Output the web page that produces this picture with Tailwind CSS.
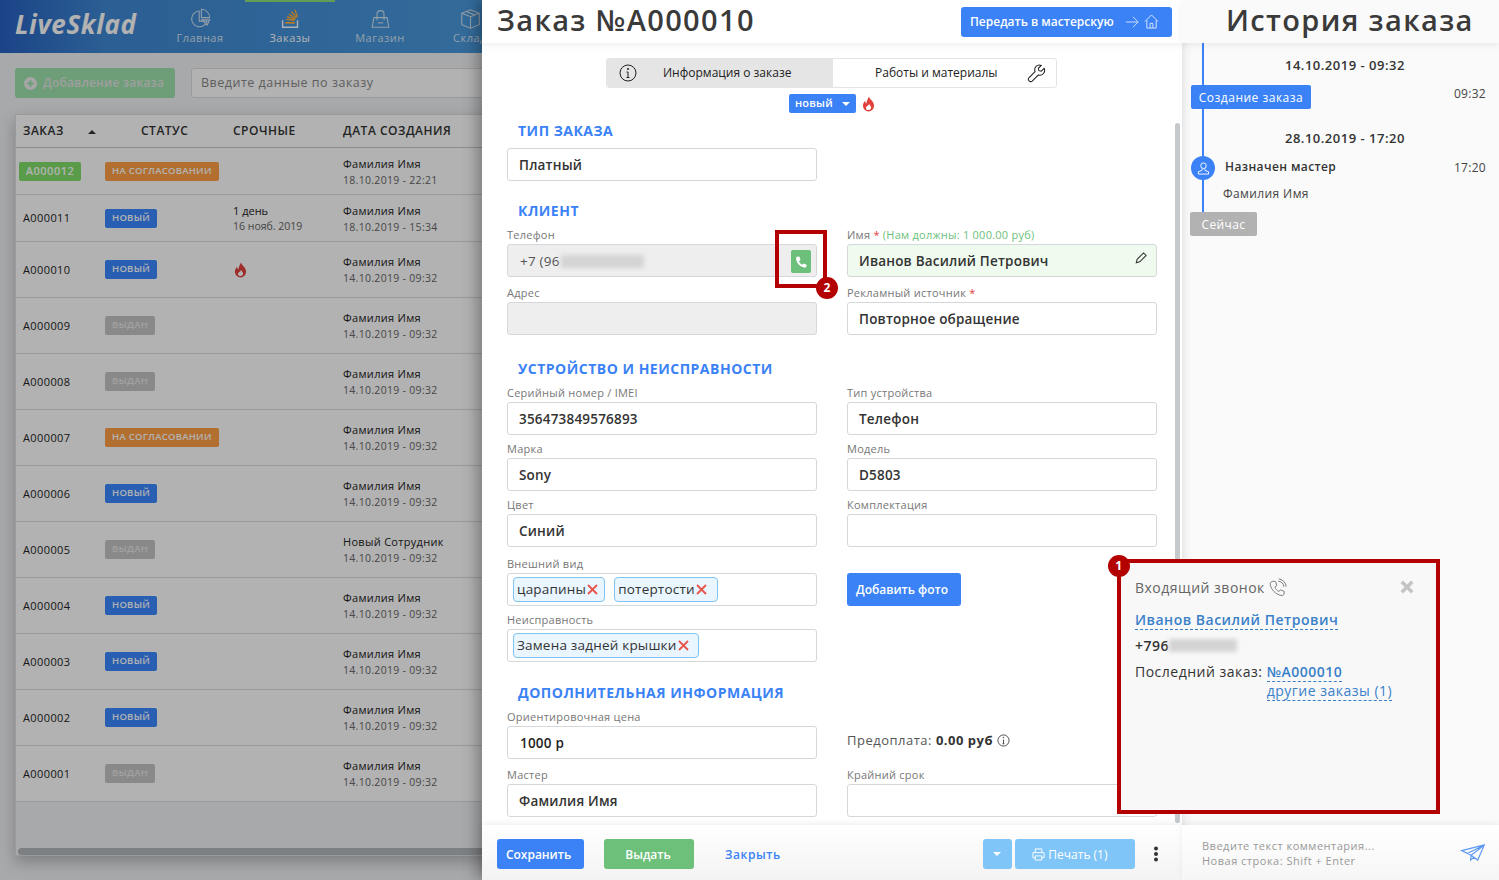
<!DOCTYPE html>
<html lang="ru">
  <head>
    <meta charset="UTF-8" />
    <meta name="viewport" content="width=device-width, initial-scale=1.0" />
    <title>LiveSklad</title>
    <script src="https://cdn.jsdelivr.net/npm/@tailwindcss/browser@4"></script>
  </head>
  <body class="font-['Open_Sans','Noto_Sans',sans-serif] text-[#333]">
    <div class="relative flex h-screen w-full overflow-hidden bg-white">

      <!-- Left: orders list under dim layer -->
      <div class="relative w-[482px] shrink-0 overflow-hidden bg-[#f1f2f5]">
        <header class="flex h-[53px] w-[700px] bg-gradient-to-r from-[#2862c2] via-[#3f88d3] via-[15%] to-[#4fa5e4]">
          <div class="w-[155px] shrink-0 pl-[15px] pt-[7px] text-[26px] leading-[34px] font-bold italic tracking-[0.6px] text-white">LiveSklad</div>
          <a class="flex w-[90px] flex-col items-center pt-[8px] text-[11px] leading-[14px] tracking-[0.5px] text-[#d6e4f2]">
            <svg class="mb-[2px] h-[21px] w-[21px]" viewBox="0 0 24 24" fill="none" stroke="currentColor" stroke-width="1.2"><path d="M10.5 3.5a9 9 0 1 0 9 11.5h-9z"/><path d="M13 1.5a9.5 9.5 0 0 1 9.5 9.5H13z"/><path d="M13.5 13.5h9l-3 6z"/></svg>
            Главная
          </a>
          <a class="relative flex w-[90px] flex-col items-center pt-[8px] text-[11px] leading-[14px] tracking-[0.5px] text-white">
            <span class="absolute top-0 left-0 h-[2px] w-full bg-[#8fe07a]"></span>
            <svg class="mb-[2px] h-[21px] w-[21px]" viewBox="0 0 24 24" fill="none" stroke-width="1.6"><path d="M3 14v8h17v-8" stroke="#fff"/><path d="M6 17h11" stroke="#ffb13b" stroke-width="2"/><path d="M7 13l10 1M8 10l9 3M10 7l8 5M13 4l6 7M17 2l3 8" stroke="#ffb13b"/></svg>
            Заказы
          </a>
          <a class="flex w-[90px] flex-col items-center pt-[8px] text-[11px] leading-[14px] tracking-[0.5px] text-[#d6e4f2]">
            <svg class="mb-[2px] h-[21px] w-[21px]" viewBox="0 0 24 24" fill="none" stroke="currentColor" stroke-width="1.2"><path d="M4.5 11h15l2 11h-19z"/><path d="M8 14V7a4 4 0 0 1 8 0v7"/><path d="M9 17h6"/></svg>
            Магазин
          </a>
          <a class="flex w-[90px] flex-col items-center pt-[8px] text-[11px] leading-[14px] tracking-[0.5px] text-[#d6e4f2]">
            <svg class="mb-[2px] h-[21px] w-[21px]" viewBox="0 0 24 24" fill="none" stroke="currentColor" stroke-width="1.2"><path d="M12 2l10 4v13l-10 4-10-4V6z"/><path d="M2 6l10 4 10-4M12 10v13M7 4l10 4"/></svg>
            Склад
          </a>
        </header>

        <div class="mt-[15px] flex pl-[15px]">
          <button class="flex h-[30px] w-[160px] shrink-0 items-center gap-[6px] rounded-[3px] bg-[#9ce2ab] pl-[9px] text-[12px] font-semibold tracking-[0.2px] whitespace-nowrap text-[#e4e4e4]">
            <svg class="h-[13px] w-[13px] shrink-0" viewBox="0 0 14 14"><circle cx="7" cy="7" r="7" fill="#eee"/><path d="M7 3.5v7M3.5 7h7" stroke="#9ce2ab" stroke-width="2"/></svg>
            Добавление заказа
          </button>
          <div class="ml-[16px] flex h-[30px] w-[400px] shrink-0 items-center rounded-[3px] border border-[#ddd] bg-white pl-[9px] text-[12.5px] tracking-[0.5px] text-[#888]">Введите данные по заказу</div>
        </div>

        <div class="mt-[16px] ml-[15px] flex h-[742px] w-[600px] flex-col border border-[#ddd] shadow-[0_6px_14px_rgba(0,0,0,0.25)]">
          <div class="flex h-[33px] shrink-0 items-center border-b border-[#ccc] bg-white text-[12px] font-semibold tracking-[0.5px] text-[#333]">
            <div class="relative w-[125px] pl-[7px]">ЗАКАЗ<span class="absolute top-[8px] left-[72px] h-0 w-0 border-x-[4px] border-b-[4px] border-x-transparent border-b-[#333]"></span></div>
            <div class="w-[92px]">СТАТУС</div>
            <div class="w-[110px]">СРОЧНЫЕ</div>
            <div>ДАТА СОЗДАНИЯ</div>
          </div>
          <div id="orderRows"></div>
          <div class="flex-1"></div>
          <div class="mx-[2px] h-[7px] rounded-full bg-[#b4b8bc]"></div>
        </div>

        <div class="absolute inset-0 bg-black/30"></div>
      </div>

      <!-- Middle: order form -->
      <div class="relative z-10 flex w-[700px] shrink-0 flex-col bg-white shadow-[-5px_0_14px_rgba(0,0,0,0.3)]">
        <header class="z-10 flex h-[43px] shrink-0 items-center justify-between bg-white pr-[10px] pl-[15px] shadow-[0_2px_8px_rgba(0,0,0,0.07)]">
          <h1 class="-mt-[3px] text-[29px] leading-[40px] font-semibold tracking-[1.35px] text-[#3a3a3a]">Заказ №A000010</h1>
          <button class="flex h-[30px] w-[211px] items-center justify-between rounded-[3px] bg-[#3b82f6] pr-[13px] pl-[9px] text-[12px] font-semibold text-white">
            Передать в мастерскую
            <span class="flex items-center gap-[5px]">
              <svg class="h-[14px] w-[14px]" viewBox="0 0 16 16" fill="none" stroke="#dbe8ff" stroke-width="1"><path d="M1 8h14M9 2l6 6-6 6"/></svg>
              <svg class="h-[15px] w-[15px]" viewBox="0 0 16 16" fill="none" stroke="#dbe8ff" stroke-width="1"><path d="M1 8l7-7 7 7M3 6.5V15h10V6.5M6.5 15v-5h3v5"/></svg>
            </span>
          </button>
        </header>

        <div class="relative flex-1 overflow-hidden">
          <div class="absolute top-[80px] right-[2px] h-[700px] w-[5px] rounded-full bg-[#c6c9cc]"></div>

          <div class="mt-[15px] ml-[124px] flex h-[30px] w-[451px] rounded-[3px] border border-[#e4e4e4] text-[12px] text-[#222]">
            <div class="flex w-[226px] items-center rounded-l-[3px] bg-[#e5e5e5] pl-[12px]">
              <svg class="h-[18px] w-[18px]" viewBox="0 0 18 18" fill="none" stroke="#222"><circle cx="9" cy="9" r="8"/><path d="M9 8v5.5M7.5 13.5h3M7.5 8H9"/><circle cx="9" cy="5" r=".6" fill="#222"/></svg>
              <span class="ml-[26px]">Информация о заказе</span>
            </div>
            <div class="flex flex-1 items-center pl-[42px]">
              <span>Работы и материалы</span>
              <svg class="ml-[29px] h-[19px] w-[19px]" viewBox="0 0 20 20" fill="none" stroke="#222" stroke-width="1.1"><path d="M18 4.5l-3 3-2.5-.5-.5-2.5 3-3a5 5 0 0 0-6.5 6.5L2 14.5a2.5 2.5 0 0 0 3.5 3.5L12 11.500A5 5 0 0 0 18 4.5z"/></svg>
            </div>
          </div>

          <div class="mt-[6px] flex h-[19px] items-center pl-[307px]">
            <span class="flex h-[19px] w-[67px] items-center rounded-[2px] bg-[#3b82f6] pl-[6px] text-[11px] font-semibold tracking-[0.2px] text-white">новый<span class="ml-[9px] h-0 w-0 border-x-[4px] border-t-[4px] border-x-transparent border-t-white"></span></span>
            <svg class="ml-[6px] h-[16px] w-[13px]" viewBox="0 0 14 16"><path fill="#e2403a" fill-rule="evenodd" d="M7.500 0c.5 3 5.500 5 5.500 10a6 6 0 0 1-12 0c0-2.500 1-4 2.500-5.500 0 1.500.3 2.500 1.300 3C5 5 6 3 7.500 0zM7 14.500c1.700 0 2.800-1.200 2.800-2.700S8.200 9.500 7.700 8C7.300 9.700 4.200 10.500 4.200 12S5.300 14.500 7 14.500z"/></svg>
          </div>

          <div class="px-[25px]">
            <h2 class="mt-[8px] ml-[11px] h-[20px] text-[14px] leading-[20px] font-bold tracking-[0.5px] text-[#3b82f6]">ТИП ЗАКАЗА</h2>
            <div class="mt-[7px] flex h-[33px] w-[310px] items-center rounded-[3px] border border-[#d5d8db] pt-[2px] pl-[11px] text-[13.5px] font-semibold tracking-[0.2px]">Платный</div>

            <h2 class="mt-[20px] ml-[11px] h-[20px] text-[14px] leading-[20px] font-bold tracking-[0.5px] text-[#3b82f6]">КЛИЕНТ</h2>
            <div class="mt-[7px] grid grid-cols-[310px_310px] gap-x-[30px] gap-y-[9px]">
              <div>
                <label class="block h-[16px] text-[11px] leading-[13px] tracking-[0.25px] text-[#777]">Телефон</label>
                <div class="relative flex h-[33px] items-center rounded-[3px] border border-[#d5d8db] bg-[#eee] pt-[2px] pl-[12px] text-[13.5px] tracking-[0.2px] text-[#555]">
                  +7 (96
                  <span class="ml-[1px] h-[13px] w-[83px] bg-[#d4d4d4] blur-[2px]"></span>
                  <span class="absolute top-[5px] right-[5px] flex h-[23px] w-[20px] items-center justify-center rounded-[2px] bg-[#6cc07a]">
                    <svg class="h-[14px] w-[14px]" viewBox="0 0 24 24"><path fill="#fff" d="M6.600 2.500l3 .5 1.500 5.500-2.500 2c1 2.500 2.500 4.500 5.500 6l2.500-2 5 2-.5 3.500c-.5 1.500-2 2-3.500 1.500C10 20 4.500 14 3.500 6.500 3.300 4.500 4.500 3 6.600 2.500z"/></svg>
                  </span>
                </div>
              </div>
              <div>
                <label class="block h-[16px] text-[11px] leading-[13px] tracking-[0.25px] text-[#777]">Имя <span class="text-[#e2403a]">*</span> <span class="text-[#6cc07a]">(Нам должны: 1 000.00 руб)</span></label>
                <div class="relative flex h-[33px] items-center rounded-[3px] border border-[#d5d8db] bg-[#f0fbef] pt-[2px] pl-[11px] text-[13.5px] font-semibold tracking-[0.2px]">
                  Иванов Василий Петрович
                  <svg class="absolute top-[7px] right-[9px] h-[12px] w-[12px]" viewBox="0 0 14 14" fill="none" stroke="#333" stroke-width="1.2"><path d="M1.500 12.500l1-4L10 1l3 3-7.500 7.500z"/></svg>
                </div>
              </div>
              <div>
                <label class="block h-[16px] text-[11px] leading-[13px] tracking-[0.25px] text-[#777]">Адрес</label>
                <div class="h-[33px] rounded-[3px] border border-[#d5d8db] bg-[#eee]"></div>
              </div>
              <div>
                <label class="block h-[16px] text-[11px] leading-[13px] tracking-[0.25px] text-[#777]">Рекламный источник <span class="text-[#e2403a]">*</span></label>
                <div class="flex h-[33px] items-center rounded-[3px] border border-[#d5d8db] pt-[2px] pl-[11px] text-[13.5px] font-semibold tracking-[0.2px]">Повторное обращение</div>
              </div>
            </div>

            <h2 class="mt-[24px] ml-[11px] h-[20px] text-[14px] leading-[20px] font-bold tracking-[0.5px] text-[#3b82f6]">УСТРОЙСТВО И НЕИСПРАВНОСТИ</h2>
            <div class="mt-[7px] grid grid-cols-[310px_310px] gap-x-[30px] gap-y-[7px]">
              <div>
                <label class="block h-[16px] text-[11px] leading-[13px] tracking-[0.25px] text-[#777]">Серийный номер / IMEI</label>
                <div class="flex h-[33px] items-center rounded-[3px] border border-[#d5d8db] pt-[2px] pl-[11px] text-[13.5px] font-semibold tracking-[0.2px]">356473849576893</div>
              </div>
              <div>
                <label class="block h-[16px] text-[11px] leading-[13px] tracking-[0.25px] text-[#777]">Тип устройства</label>
                <div class="flex h-[33px] items-center rounded-[3px] border border-[#d5d8db] pt-[2px] pl-[11px] text-[13.5px] font-semibold tracking-[0.2px]">Телефон</div>
              </div>
              <div>
                <label class="block h-[16px] text-[11px] leading-[13px] tracking-[0.25px] text-[#777]">Марка</label>
                <div class="flex h-[33px] items-center rounded-[3px] border border-[#d5d8db] pt-[2px] pl-[11px] text-[13.5px] font-semibold tracking-[0.2px]">Sony</div>
              </div>
              <div>
                <label class="block h-[16px] text-[11px] leading-[13px] tracking-[0.25px] text-[#777]">Модель</label>
                <div class="flex h-[33px] items-center rounded-[3px] border border-[#d5d8db] pt-[2px] pl-[11px] text-[13.5px] font-semibold tracking-[0.2px]">D5803</div>
              </div>
              <div>
                <label class="block h-[16px] text-[11px] leading-[13px] tracking-[0.25px] text-[#777]">Цвет</label>
                <div class="flex h-[33px] items-center rounded-[3px] border border-[#d5d8db] pt-[2px] pl-[11px] text-[13.5px] font-semibold tracking-[0.2px]">Синий</div>
              </div>
              <div>
                <label class="block h-[16px] text-[11px] leading-[13px] tracking-[0.25px] text-[#777]">Комплектация</label>
                <div class="h-[33px] rounded-[3px] border border-[#d5d8db]"></div>
              </div>
              <div class="mt-[3px]">
                <label class="block h-[16px] text-[11px] leading-[13px] tracking-[0.25px] text-[#777]">Внешний вид</label>
                <div class="flex h-[33px] items-center gap-[9px] rounded-[3px] border border-[#d5d8db] pl-[5px] text-[13.5px] tracking-[0.2px]">
                  <span class="flex h-[25px] items-center gap-[1px] rounded-[4px] border border-[#7fc4f0] bg-[#e9f6ff] pr-[6px] pl-[3px]">царапины<svg class="h-[11px] w-[11px]" viewBox="0 0 11 11" stroke="#e8534a" stroke-width="1.800"><path d="M1 1l9 9M10 1l-9 9"/></svg></span>
                  <span class="flex h-[25px] items-center gap-[1px] rounded-[4px] border border-[#7fc4f0] bg-[#e9f6ff] pr-[10px] pl-[3px]">потертости<svg class="h-[11px] w-[11px]" viewBox="0 0 11 11" stroke="#e8534a" stroke-width="1.800"><path d="M1 1l9 9M10 1l-9 9"/></svg></span>
                </div>
              </div>
              <div class="mt-[3px] pt-[16px]">
                <button class="h-[33px] w-[114px] rounded-[3px] bg-[#3b82f6] pr-[4px] text-[12px] font-semibold text-white">Добавить фото</button>
              </div>
              <div>
                <label class="block h-[16px] text-[11px] leading-[13px] tracking-[0.25px] text-[#777]">Неисправность</label>
                <div class="flex h-[33px] items-center rounded-[3px] border border-[#d5d8db] pl-[5px] text-[13.5px] tracking-[0.2px]">
                  <span class="flex h-[25px] items-center gap-[1px] rounded-[4px] border border-[#7fc4f0] bg-[#e9f6ff] pr-[9px] pl-[3px]">Замена задней крышки<svg class="h-[11px] w-[11px]" viewBox="0 0 11 11" stroke="#e8534a" stroke-width="1.800"><path d="M1 1l9 9M10 1l-9 9"/></svg></span>
                </div>
              </div>
              <div></div>
            </div>

            <h2 class="mt-[21px] ml-[11px] h-[20px] text-[14px] leading-[20px] font-bold tracking-[0.5px] text-[#3b82f6]">ДОПОЛНИТЕЛЬНАЯ ИНФОРМАЦИЯ</h2>
            <div class="mt-[7px] grid grid-cols-[310px_310px] gap-x-[30px] gap-y-[9px]">
              <div>
                <label class="block h-[16px] text-[11px] leading-[13px] tracking-[0.25px] text-[#777]">Ориентировочная цена</label>
                <div class="flex h-[33px] items-center rounded-[3px] border border-[#d5d8db] pt-[2px] pl-[12px] text-[13.5px] font-semibold tracking-[0.2px] text-[#222]">1000 р</div>
              </div>
              <div class="flex items-center pt-[12px] text-[13px] tracking-[0.5px] text-[#555]">
                Предоплата:&nbsp;<b class="font-bold text-[#333]">0.00 руб</b>
                <svg class="ml-[4px] h-[13px] w-[13px]" viewBox="0 0 14 14" fill="none" stroke="#444"><circle cx="7" cy="7" r="6"/><path d="M7 6v4.500M6 10.500h2"/><circle cx="7" cy="3.800" r=".4" fill="#444"/></svg>
              </div>
              <div>
                <label class="block h-[16px] text-[11px] leading-[13px] tracking-[0.25px] text-[#777]">Мастер</label>
                <div class="flex h-[33px] items-center rounded-[3px] border border-[#d5d8db] pt-[2px] pl-[11px] text-[13.5px] font-semibold tracking-[0.2px]">Фамилия Имя</div>
              </div>
              <div>
                <label class="block h-[16px] text-[11px] leading-[13px] tracking-[0.25px] text-[#777]">Крайний срок</label>
                <div class="h-[33px] rounded-[3px] border border-[#d5d8db]"></div>
              </div>
            </div>
          </div>
        </div>

        <footer class="z-10 flex h-[55px] shrink-0 items-start bg-gradient-to-b from-white to-[#f3f3f3] pt-[14px] pl-[15px] text-[12px] font-semibold shadow-[0_-2px_6px_rgba(0,0,0,0.06)]">
          <button class="h-[30px] w-[87px] rounded-[3px] bg-[#3b82f6] pt-[2px] pr-[4px] text-white">Сохранить</button>
          <button class="ml-[20px] h-[30px] w-[90px] rounded-[3px] bg-[#6cc07a] pt-[2px] pr-[2px] text-white">Выдать</button>
          <a class="ml-[31px] flex h-[30px] items-center pt-[2px] tracking-[0.6px] text-[#3b82f6]">Закрыть</a>
          <button class="ml-[202px] flex h-[30px] w-[29px] items-center justify-center rounded-[3px] bg-[#80c5f8]"><span class="h-0 w-0 border-x-[4px] border-t-[4px] border-x-transparent border-t-white"></span></button>
          <button class="ml-[3px] flex h-[30px] w-[120px] items-center justify-center gap-[3px] rounded-[3px] bg-[#80c5f8] pt-[1px] pr-[10px] font-normal text-white">
            <svg class="h-[13px] w-[13px]" viewBox="0 0 14 14" fill="none" stroke="#fff"><path d="M3.500 5V1h7v4M3.500 10.500H1V5h12v5.500h-2.500M3.500 8.500h7V13h-7z"/></svg>
            Печать (1)
          </button>
          <svg class="mt-[7px] ml-[18px] h-[16px] w-[6px]" viewBox="0 0 6 16" fill="#333"><circle cx="3" cy="2.500" r="2"/><circle cx="3" cy="8" r="2"/><circle cx="3" cy="13.500" r="2"/></svg>
        </footer>
      </div>

      <!-- Right: history -->
      <div class="relative flex flex-1 flex-col bg-[#fafafa]">
        <header class="z-10 flex h-[43px] shrink-0 items-center bg-[#fafafa] pl-[44px] shadow-[0_2px_8px_rgba(0,0,0,0.07)]">
          <h2 class="-mt-[3px] text-[29px] leading-[40px] font-semibold tracking-[1.35px] whitespace-nowrap text-[#3a3a3a]">История заказа</h2>
        </header>
        <div class="relative flex-1 text-[12px]">
          <div class="absolute top-0 left-[20px] h-[170px] w-[2px] bg-[#3b82f6]"></div>
          <div class="relative">
            <div class="mt-[14px] h-[16px] pl-[103px] text-[13px] leading-[16px] font-semibold tracking-[0.5px] text-[#333]">14.10.2019 - 09:32</div>
            <div class="mt-[12px] flex h-[24px] items-start justify-between pr-[13px] pl-[9px]">
              <span class="flex h-[24px] w-[120px] items-center justify-center rounded-[2px] bg-[#3b82f6] pt-[2px] tracking-[0.5px] text-white">Создание заказа</span>
              <span class="tracking-[0.3px] text-[#444]">09:32</span>
            </div>
            <div class="mt-[21px] h-[16px] pl-[103px] text-[13px] leading-[16px] font-semibold tracking-[0.5px] text-[#333]">28.10.2019 - 17:20</div>
            <div class="mt-[10px] flex h-[24px] items-center pr-[13px] pl-[9px]">
              <span class="flex h-[24px] w-[24px] items-center justify-center rounded-full bg-[#3b82f6]">
                <svg class="h-[13px] w-[13px]" viewBox="0 0 14 14" fill="none" stroke="#fff"><circle cx="7" cy="4" r="3"/><path d="M5.500 7v2L1.500 10.500V13h11v-2.500L8.500 9V7"/></svg>
              </span>
              <span class="ml-[10px] -mt-[2px] font-semibold tracking-[0.4px] text-[#333]">Назначен мастер</span>
              <span class="ml-auto tracking-[0.3px] text-[#444]">17:20</span>
            </div>
            <div class="mt-[6px] h-[16px] pl-[41px] leading-[16px] tracking-[0.4px] text-[#444]">Фамилия Имя</div>
            <div class="mt-[10px] ml-[8px] flex h-[24px] w-[67px] items-center justify-center rounded-[2px] bg-[#b2b2b2] pt-[2px] tracking-[0.4px] text-white">Сейчас</div>
          </div>
        </div>
        <footer class="z-10 flex h-[55px] shrink-0 items-start justify-between bg-gradient-to-b from-white to-[#f6f6f6] pt-[13px] pr-[13px] pl-[20px] text-[11px] leading-[15px] tracking-[0.5px] text-[#999] shadow-[0_-2px_6px_rgba(0,0,0,0.06)]">
          <div>Введите текст комментария...<br />Новая строка: Shift + Enter</div>
          <svg class="mt-[6px] h-[17px] w-[26px]" viewBox="0 0 26 18" fill="none" stroke="#5b97f5" stroke-width="1.2"><path d="M1 7L25 1 18 17 11 12zM25 1L11 12l-.5 5 3.500-3M25 1L7 10"/></svg>
        </footer>
      </div>

      <!-- Callout: phone button -->
      <div class="absolute top-[230px] left-[775px] z-20 h-[58px] w-[52px] border-[4px] border-[#b30000]">
        <span class="absolute top-[43px] left-[37px] flex h-[22px] w-[22px] items-center justify-center rounded-full bg-[#b30000] text-[12px] font-bold text-white">2</span>
      </div>

      <!-- Callout: incoming call -->
      <div class="absolute top-[559px] left-[1117px] z-20 h-[255px] w-[323px] border-[4px] border-[#b30000] bg-[#f8f8f8] pt-[13px] pl-[14px] text-[14px] tracking-[0.5px] text-[#333]">
        <span class="absolute -top-[8px] -left-[13px] flex h-[22px] w-[22px] items-center justify-center rounded-full bg-[#b30000] text-[12px] font-bold text-white">1</span>
        <svg class="absolute top-[17px] right-[22px] h-[14px] w-[14px]" viewBox="0 0 12 12" stroke="#c4c4c4" stroke-width="3"><path d="M1.500 1.500l9 9M10.500 1.500l-9 9"/></svg>
        <div class="flex h-[22px] items-center text-[#666]">
          Входящий звонок
          <svg class="ml-[3px] h-[19px] w-[19px]" viewBox="0 0 24 24" fill="none" stroke="#777" stroke-width="1.2"><path d="M6.600 4l3 .5 1.500 5-2.500 2c1 2.500 2.500 4 5 5.500l2.500-2 4.500 2-.5 3.500c-.5 1.500-2 2-3.500 1.500C9.500 20.500 4 15 2.800 8c-.3-2 1.300-3.500 3.800-4zM13 4a8 8 0 0 1 7 7M13.500 1a11 11 0 0 1 9.500 10"/></svg>
        </div>
        <div class="mt-[11px]"><a class="border-b border-dashed border-[#3a80c9] font-semibold text-[#3a80c9]">Иванов Василий Петрович</a></div>
        <div class="mt-[4px] flex h-[22px] items-center font-semibold">+796<span class="h-[13px] w-[68px] bg-[#d4d4d4] blur-[2px]"></span></div>
        <div class="mt-[4px] flex">
          <span class="pt-[1px]">Последний заказ:&nbsp;</span>
          <div class="flex flex-col items-start pt-[3px] leading-[18px]">
            <a class="border-b border-dashed border-[#3a80c9] font-semibold text-[#3a80c9]">№A000010</a>
            <a class="border-b border-dashed border-[#3a80c9] text-[#3a80c9]">другие заказы (1)</a>
          </div>
        </div>
      </div>
    </div>

    <script>
      const badges = {
        new: ["НОВЫЙ", "bg-[#3c88ff] text-white"],
        done: ["ВЫДАН", "bg-[#c4c4c4] text-[#e8e8e8]"],
        wait: ["НА СОГЛАСОВАНИИ", "bg-[#ff9f45] text-white"],
      };
      const flame = '<svg class="ml-[1px] h-[16px] w-[13px]" viewBox="0 0 14 16"><path fill="#e2403a" fill-rule="evenodd" d="M7.500 0c.5 3 5.500 5 5.500 10a6 6 0 0 1-12 0c0-2.500 1-4 2.500-5.500 0 1.500.3 2.500 1.300 3C5 5 6 3 7.500 0zM7 14.500c1.700 0 2.800-1.200 2.800-2.700S8.200 9.500 7.700 8C7.300 9.700 4.200 10.500 4.200 12S5.300 14.500 7 14.500z"/></svg>';
      const orders = [
        ["A000012", "wait", "", "Фамилия Имя", "18.10.2019 - 22:21", "h-[47px]"],
        ["A000011", "new", '<div class="text-[11px] leading-[16px] text-[#222]">1 день</div><div class="text-[10.5px] leading-[15px] text-[#666]">16 нояб. 2019</div>', "Фамилия Имя", "18.10.2019 - 15:34", "h-[47px]"],
        ["A000010", "new", flame, "Фамилия Имя", "14.10.2019 - 09:32", "h-[56px]"],
        ["A000009", "done", "", "Фамилия Имя", "14.10.2019 - 09:32", "h-[56px]"],
        ["A000008", "done", "", "Фамилия Имя", "14.10.2019 - 09:32", "h-[56px]"],
        ["A000007", "wait", "", "Фамилия Имя", "14.10.2019 - 09:32", "h-[56px]"],
        ["A000006", "new", "", "Фамилия Имя", "14.10.2019 - 09:32", "h-[56px]"],
        ["A000005", "done", "", "Новый Сотрудник", "14.10.2019 - 09:32", "h-[56px]"],
        ["A000004", "new", "", "Фамилия Имя", "14.10.2019 - 09:32", "h-[56px]"],
        ["A000003", "new", "", "Фамилия Имя", "14.10.2019 - 09:32", "h-[56px]"],
        ["A000002", "new", "", "Фамилия Имя", "14.10.2019 - 09:32", "h-[56px]"],
        ["A000001", "done", "", "Фамилия Имя", "14.10.2019 - 09:32", "h-[56px]"],
      ];

      document.getElementById("orderRows").innerHTML = orders.map((o, i) => {
        const [label, cls] = badges[o[1]];
        const num = i === 0
          ? `<span class="ml-[3px] flex h-[19px] w-[62px] items-center justify-center rounded-[2px] bg-[#80df69] text-[11px] font-semibold tracking-[0.5px] text-white">${o[0]}</span>`
          : `<span class="ml-[7px] text-[11px] leading-[16px] tracking-[0.4px] text-[#222]">${o[0]}</span>`;
        const datePad = o[5] === "h-[47px]" ? "pt-[2px]" : "";
        return `<div class="flex items-center border-b border-[#ddd] bg-white ${o[5]}">
          <div class="flex w-[89px] items-center">${num}</div>
          <div class="flex w-[128px] items-center"><span class="flex h-[19px] items-center rounded-[2px] px-[7px] text-[9.5px] font-semibold tracking-[0.25px] ${cls}">${label}</span></div>
          <div class="w-[110px]">${o[2]}</div>
          <div class="${datePad}"><div class="text-[11px] leading-[16px] tracking-[0.3px] text-[#222]">${o[3]}</div><div class="text-[10.5px] leading-[16px] tracking-[0.3px] text-[#666]">${o[4]}</div></div>
        </div>`;
      }).join("");
    </script>
  </body>
</html>
